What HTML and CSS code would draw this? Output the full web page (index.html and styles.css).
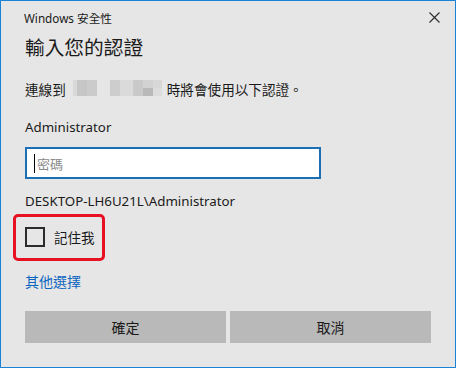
FILE: index.html
```html
<!DOCTYPE html>
<html lang="zh-Hant">
<head>
<meta charset="utf-8">
<title>Windows 安全性</title>
<link rel="stylesheet" href="styles.css">
</head>
<body>
<div class="window">
  <div class="titlebar">
    <span class="title">Windows 安全性</span>
    <svg class="close" width="11" height="11" viewBox="0 0 11 11"><path d="M0.5 0.5 L10.5 10.5 M10.5 0.5 L0.5 10.5" stroke="#2b2b2b" stroke-width="1.1" fill="none"/></svg>
  </div>
  <div class="content">
    <div class="heading">輸入您的認證</div>
    <div class="connect">
      <span>連線到</span>
      <span class="blur g1"><i class="c a"></i><i class="c b"></i><i class="c d"></i></span>
      <span class="blur g2"><i class="c e"></i><i class="c f"></i><i class="c g"></i><i class="c split"><i class="h"></i><i class="k"></i></i><i class="c split s2"><i class="m"></i><i class="n"></i></i></span>
      <span class="after">時將會使用以下認證。</span>
    </div>
    <div class="user">Administrator</div>
    <div class="field"><span class="caret"></span><span class="placeholder">密碼</span></div>
    <div class="domain">DESKTOP-LH6U21L\Administrator</div>
    <div class="remember"><span class="box"></span><span>記住我</span></div>
    <div class="more">其他選擇</div>
    <div class="buttons">
      <div class="btn">確定</div>
      <div class="btn">取消</div>
    </div>
  </div>
</div>
</body>
</html>
```

FILE: styles.css
```css
html, body {
  margin: 0;
  padding: 0;
  background: #e6e6e6;
}
.window {
  width: 456px;
  height: 368px;
  box-sizing: border-box;
  border: 1px solid #1883d7;
  background: #e6e6e6;
  font-family: "Noto Sans", "Noto Sans CJK TC", sans-serif;
  color: #1a1a1a;
  overflow: hidden;
}
.titlebar {
  height: 32px;
  display: flex;
  align-items: center;
  justify-content: space-between;
  padding: 0 15px 0 23px;
}
.title {
  font-size: 11.7px;
  color: #1a1a1a;
}
.close {
  display: block;
  margin-top: 1px;
}
.content {
  padding: 0 23px 0 24px;
}
.heading {
  height: 28px;
  line-height: 28px;
  font-size: 19.7px;
  font-family: "Noto Sans CJK TC", sans-serif;
}
.connect {
  margin-top: 18px;
  height: 20px;
  display: flex;
  align-items: center;
  font-size: 13.6px;
  font-family: "Noto Sans CJK TC", sans-serif;
}
.blur {
  display: flex;
  height: 16px;
  margin-top: -3px;
}
.g1 { margin-left: 7px; }
.g2 { margin-left: 13px; }
.after { margin-left: 5px; }
.c { display: block; height: 16px; }
.a { width: 4px; background: #d9d9d9; }
.b { width: 10px; background: #c6c6c6; }
.d { width: 10px; background: #cbcbcb; }
.e { width: 10px; background: #cdcdcd; }
.f { width: 13px; background: #dadada; }
.g { width: 10px; background: #c9c9c9; }
.split { width: 10px; display: flex; flex-direction: column; }
.split i { display: block; flex: 1; }
.h { background: #d2d2d2; }
.k { background: #b9b9b9; }
.s2 { width: 9px; }
.m { background: #d7d7d7; }
.n { background: #dcdcdc; }
.user {
  margin-top: 18px;
  height: 20px;
  line-height: 20px;
  font-size: 13.3px;
}
.field {
  margin-top: 10px;
  width: 296px;
  height: 32px;
  box-sizing: border-box;
  border: 2px solid #1a6fb5;
  background: #ffffff;
  display: flex;
  align-items: center;
  padding-left: 7px;
}
.caret {
  width: 1px;
  height: 19px;
  background: #000;
}
.placeholder {
  margin-left: 2px;
  font-size: 13px;
  color: #8a8a8a;
  font-family: "Noto Sans CJK TC", sans-serif;
}
.domain {
  margin-top: 12px;
  height: 20px;
  line-height: 20px;
  font-size: 13.3px;
}
.remember {
  margin-top: 3px;
  margin-left: -12px;
  width: 92px;
  height: 47px;
  box-sizing: border-box;
  border: 3px solid #e81123;
  border-radius: 5px;
  padding: 9px 0 10px 9px;
  display: flex;
  align-items: center;
  font-size: 13.5px;
  font-family: "Noto Sans CJK TC", sans-serif;
}
.box {
  width: 20px;
  height: 20px;
  box-sizing: border-box;
  border: 2px solid #2b2b2b;
  margin-right: 9px;
}
.more {
  margin-top: 10px;
  height: 20px;
  line-height: 20px;
  font-size: 14px;
  color: #0a64c0;
  font-family: "Noto Sans CJK TC", sans-serif;
}
.buttons {
  margin-top: 20px;
  display: flex;
  gap: 4px;
}
.btn {
  width: 201px;
  height: 32px;
  line-height: 32px;
  text-align: center;
  background: #b9b9b9;
  font-size: 14px;
  font-family: "Noto Sans CJK TC", sans-serif;
  color: #1a1a1a;
}
```
